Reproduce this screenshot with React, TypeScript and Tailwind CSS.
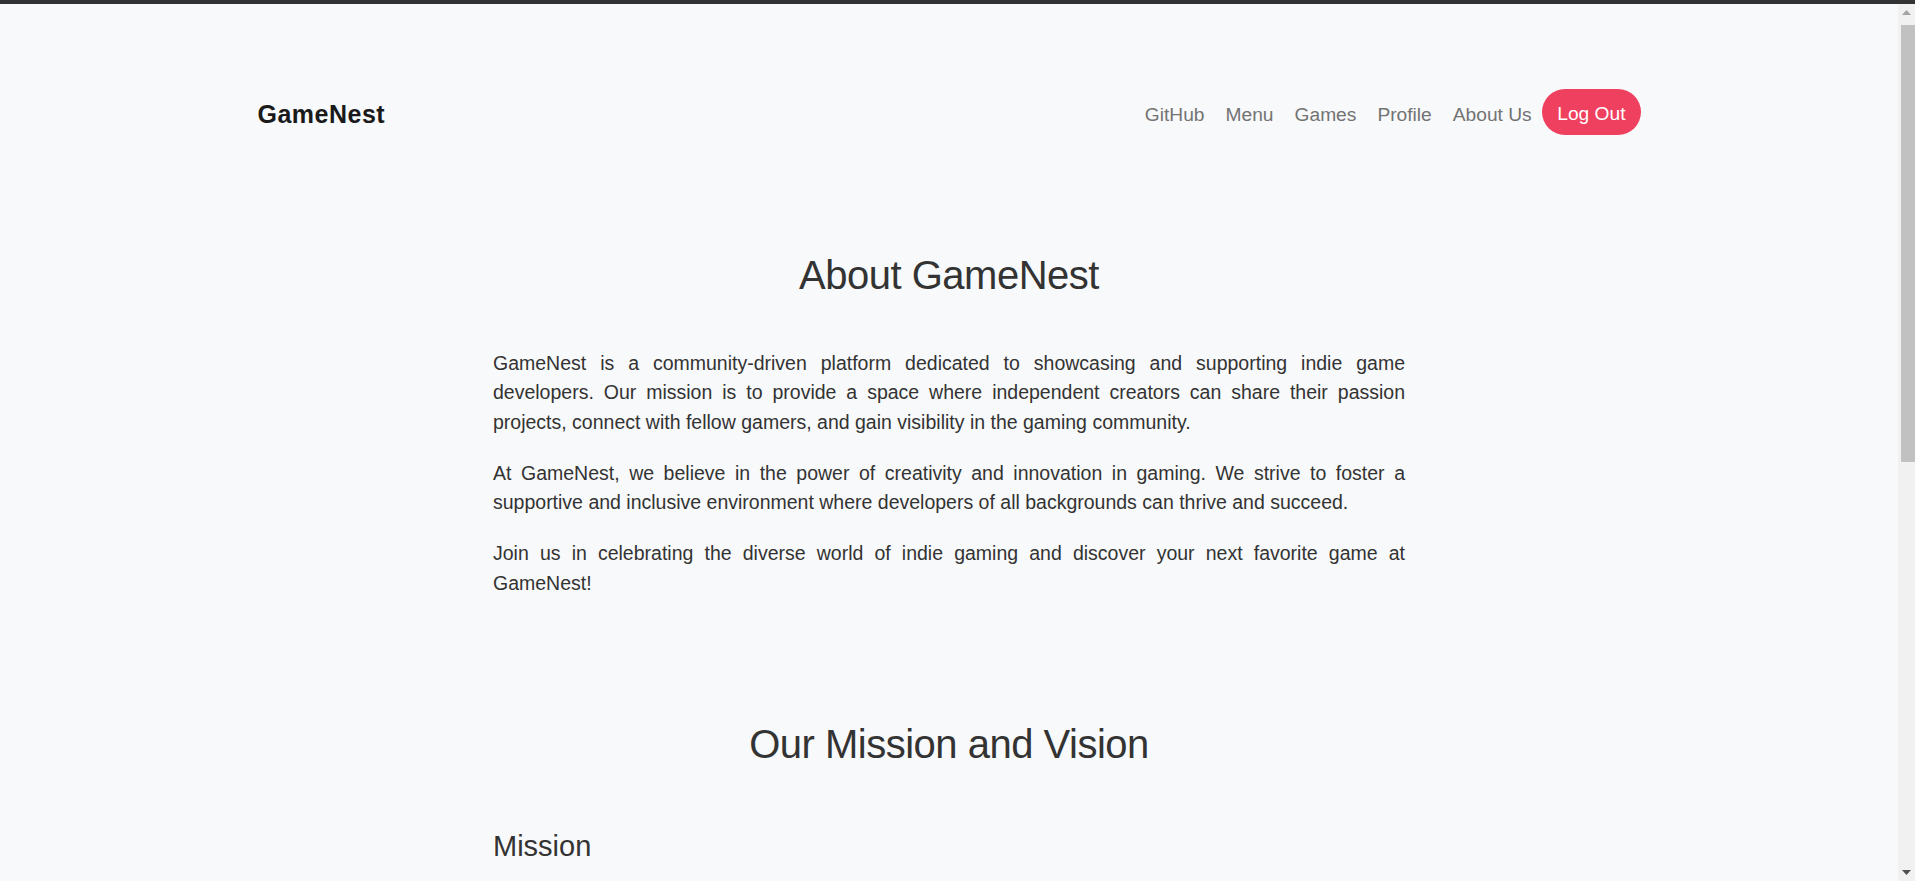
import { type ReactNode } from 'react'

const navLinks = ['GitHub', 'Menu', 'Games', 'Profile', 'About Us']

const about = [
    'GameNest is a community-driven platform dedicated to showcasing and supporting indie game developers. Our mission is to provide a space where independent creators can share their passion projects, connect with fellow gamers, and gain visibility in the gaming community.',
    'At GameNest, we believe in the power of creativity and innovation in gaming. We strive to foster a supportive and inclusive environment where developers of all backgrounds can thrive and succeed.',
    'Join us in celebrating the diverse world of indie gaming and discover your next favorite game at GameNest!',
]

function Paragraph({ children }: { children: ReactNode }) {
    return (
        <p className="text-[19.5px] leading-[29.5px] text-[#333] text-justify mb-[21.5px] last:mb-0">
            {children}
        </p>
    )
}

function Scrollbar() {
    // fake classic scrollbar, the page is taller than the window
    return (
        <div className="w-[17px] shrink-0 bg-[#f1f1f1] flex flex-col">
            <div className="h-[17px] flex items-center justify-center">
                <svg width="9" height="5" viewBox="0 0 9 5">
                    <path d="M4.5 0 9 5H0z" fill="#a3a3a3" />
                </svg>
            </div>
            <div className="mt-[4px] ml-[3px] h-[437px] bg-[#c1c1c1]" />
            <div className="flex-1" />
            <div className="h-[17px] flex items-center justify-center">
                <svg width="9" height="5" viewBox="0 0 9 5">
                    <path d="M0 0h9L4.5 5z" fill="#505050" />
                </svg>
            </div>
        </div>
    )
}

export default function App() {
    return (
        <div className="w-full h-[881px] overflow-hidden flex flex-col bg-[#f8f9fa] font-['Liberation_Sans',Arial,sans-serif]">
            <div className="h-[4px] shrink-0 bg-[#333]" />

            <div className="flex flex-1 min-h-0">
                <main className="flex-1 min-w-0 overflow-hidden">

                    <nav className="w-[1383px] mx-auto pt-[85px] h-[131px] flex items-center justify-between">
                        <a href="#" className="pt-[5px] text-[25px] font-bold tracking-[0.5px] text-[#1a1a1a]">GameNest</a>
                        <div className="flex items-center">
                            {navLinks.map((link) => (
                                <a key={link} href="#" className="pt-[6px] px-[10.5px] text-[19.2px] text-[#737373]">
                                    {link}
                                </a>
                            ))}
                            <button className="h-[46px] pt-[4px] px-[15px] rounded-full bg-[#f0405f] text-white text-[19.2px]">
                                Log Out
                            </button>
                        </div>
                    </nav>

                    <section className="w-[912px] mx-auto pt-[116px]">
                        <h1 className="text-[40px] leading-[48px] tracking-[-0.5px] text-center text-[#333]">About GameNest</h1>
                        <div className="mt-[49.5px]">
                            {about.map((text, i) => (
                                <Paragraph key={i}>{text}</Paragraph>
                            ))}
                        </div>
                    </section>

                    <section className="w-[912px] mx-auto pt-[121.5px]">
                        <h2 className="text-[40px] leading-[48px] tracking-[-0.5px] text-center text-[#333]">Our Mission and Vision</h2>
                        <h3 className="mt-[61.5px] text-[29px] leading-[34.8px] text-[#333]">Mission</h3>
                    </section>
                </main>

                <Scrollbar />
            </div>
        </div>
    )
}
